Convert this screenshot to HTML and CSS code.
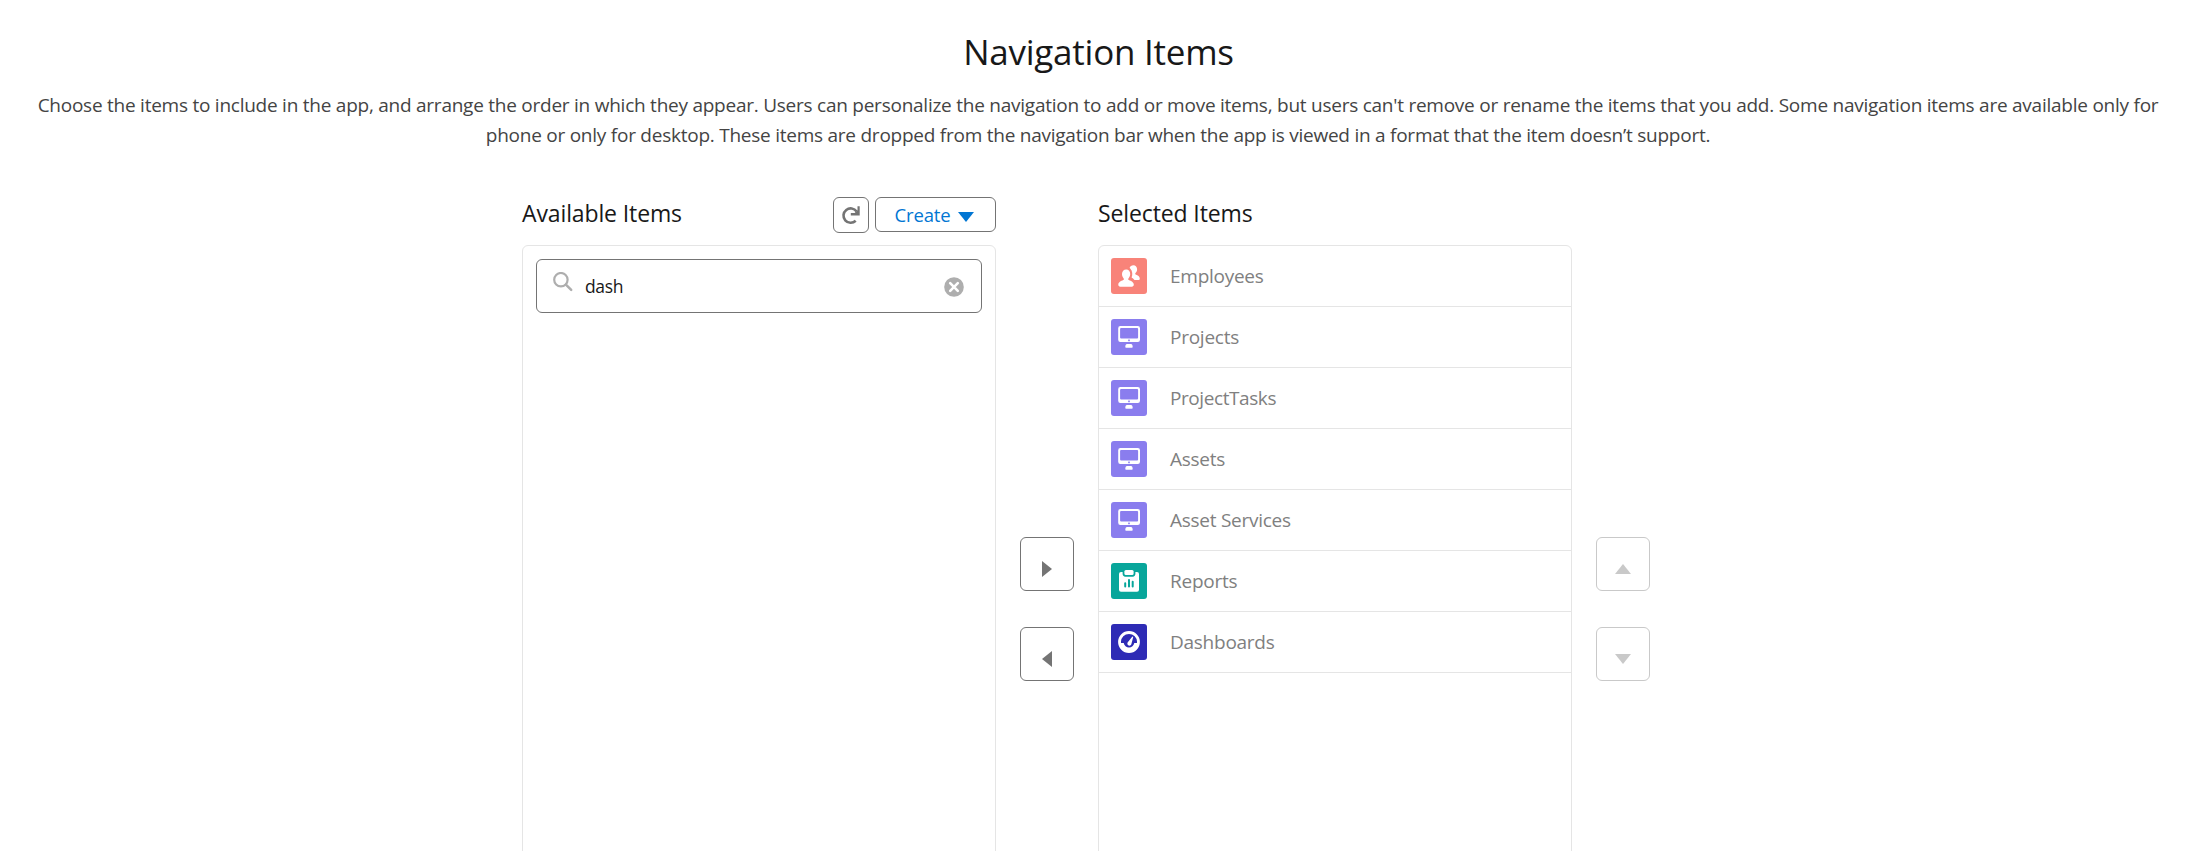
FILE: index.html
```
<!DOCTYPE html>
<html lang="en">
<head>
<meta charset="utf-8">
<title>Navigation Items</title>
<link rel="stylesheet" href="styles.css">
</head>
<body>
<svg class="sprite" aria-hidden="true">
  <symbol id="people" viewBox="0 0 36 36">
    <path fill="#fff" d="M22.400 7.200c2.300 0 3.700 1.800 3.700 4.100 0 1.600-.7 2.900-1.600 3.800-.5.5-.4 1.200.2 1.500 2.200 1 4.100 1.900 4.100 4.100 0 .9-.6 1.400-1.500 1.400h-3.800c-1-1.300-1.900-2-2.900-2.600 1.200-2.900 1-6.500-1.400-9.100-.4-.4-.6-.5-.6-.5.5-1.700 2-2.700 3.800-2.700z"/>
    <path fill="#fff" d="M15.200 11.400c2.500 0 4 2 4 4.600 0 1.700-.7 3.200-1.600 4.200-.6.6-.5 1.400.2 1.700 2.500 1.100 5 2.200 5 4.700 0 1.300-.7 2.200-2 2.200H9.300c-1.300 0-2-.9-2-2.200 0-2.500 2.500-3.600 5-4.700.7-.3.8-1.100.2-1.700-.9-1-1.500-2.500-1.500-4.200 0-2.600 1.700-4.600 4.200-4.600z"/>
  </symbol>
  <symbol id="desktop" viewBox="0 0 36 36">
    <path fill="#fff" fill-rule="evenodd" d="M9.400 7h17.400A2.200 2.200 0 0 1 29 9.200v11.600a2.200 2.200 0 0 1-2.200 2.200H9.400a2.200 2.200 0 0 1-2.200-2.200V9.200A2.200 2.200 0 0 1 9.400 7zm.7 2a1 1 0 0 0-1 1v8.600a1 1 0 0 0 1 1h16a1 1 0 0 0 1-1V10a1 1 0 0 0-1-1zM18 20.400a.9.9 0 1 0 .01 0zM16 25h4c1 0 1.700 1.200 1.700 2.700 0 .7-.4 1.100-1.100 1.100h-5.200c-.7 0-1.100-.4-1.100-1.100 0-1.500.7-2.700 1.700-2.700z"/>
  </symbol>
  <symbol id="report" viewBox="0 0 36 36">
    <path fill="#fff" d="M10 9h16a2 2 0 0 1 2 2v15.800a2 2 0 0 1-2 2H10a2 2 0 0 1-2-2V11a2 2 0 0 1 2-2z"/>
    <path fill="#08a69b" d="M11.600 8.500h12.800v2.300c0 1.700-1 2.900-2.700 2.900h-7.400c-1.700 0-2.700-1.200-2.700-2.900z"/>
    <rect fill="#fff" x="13.400" y="7" width="9.200" height="5" rx="1.500"/>
    <path stroke="#08a69b" stroke-width="2" stroke-linecap="round" d="M14.200 20.300v3.200M18 17v6.500M21.700 18.700v4.800"/>
  </symbol>
  <symbol id="gauge" viewBox="0 0 36 36">
    <circle cx="18" cy="18" r="9.500" fill="none" stroke="#fff" stroke-width="2.800"/>
    <path fill="#fff" d="M9 19h3.700c.5 2.600 2.700 4.500 5.300 4.500s4.800-1.900 5.300-4.500H27c-.5 4.800-4.300 8.500-9 8.500S9.500 23.800 9 19z"/>
    <path fill="#fff" d="M21.900 12.700c.4.200.3.500.2.800l-1.700 6.600c-.4 1.300-1.600 1.900-2.700 1.500-1.200-.5-1.700-1.800-1.100-3l4.400-5.500c.3-.4.500-.6.900-.4z"/>
  </symbol>
</svg>
<main class="page">
  <h1 class="title">Navigation Items</h1>
  <p class="intro">Choose the items to include in the app, and arrange the order in which they appear. Users can personalize the navigation to add or move items, but users can't remove or rename the items that you add. Some navigation items are available only for<br>phone or only for desktop. These items are dropped from the navigation bar when the app is viewed in a format that the item doesn’t support.</p>
  <div class="picker">
    <section class="column">
      <header class="column-head">
        <h2 class="heading">Available Items</h2>
        <div class="actions">
          <button class="refresh" aria-label="Refresh"><svg width="20" height="20" viewBox="0 0 20 20"><path fill="none" stroke="#747474" stroke-width="2.600" d="M14.700 15.800A7.200 7.200 0 1 1 15.600 6.500"/><path fill="#747474" d="M16.500 1.300h2.200v9.200h-8.900V8.100h3.800l2.900-2.900z"/></svg></button>
          <button class="create"><span>Create</span><i class="tri down"></i></button>
        </div>
      </header>
      <div class="panel available">
        <div class="search">
          <svg class="lens" width="20" height="20" viewBox="0 0 20 20" fill="none" stroke="#aeaeae"><circle cx="7.900" cy="7.700" r="6.700" stroke-width="2.200"/><path stroke-width="2.500" stroke-linecap="round" d="M12.900 12.700l5.300 5.200"/></svg>
          <span class="query">dash</span>
          <svg class="clear" width="20" height="20" viewBox="0 0 20 20"><circle cx="10" cy="10" r="9.800" fill="#aeaeae"/><path stroke="#fff" stroke-width="2.600" stroke-linecap="round" d="M6.200 6.200l7.600 7.600M13.800 6.200l-7.600 7.600"/></svg>
        </div>
      </div>
    </section>
    <div class="arrows">
      <button class="arrow" aria-label="Add"><i class="tri right"></i></button>
      <button class="arrow" aria-label="Remove"><i class="tri left"></i></button>
    </div>
    <section class="column">
      <header class="column-head"><h2 class="heading">Selected Items</h2></header>
      <ul class="panel list">
        <li class="item"><svg class="icon coral"><use href="#people"/></svg><span>Employees</span></li>
        <li class="item"><svg class="icon violet"><use href="#desktop"/></svg><span>Projects</span></li>
        <li class="item"><svg class="icon violet"><use href="#desktop"/></svg><span class="tight">ProjectTasks</span></li>
        <li class="item"><svg class="icon violet"><use href="#desktop"/></svg><span>Assets</span></li>
        <li class="item"><svg class="icon violet"><use href="#desktop"/></svg><span>Asset Services</span></li>
        <li class="item"><svg class="icon teal"><use href="#report"/></svg><span>Reports</span></li>
        <li class="item"><svg class="icon indigo"><use href="#gauge"/></svg><span>Dashboards</span></li>
      </ul>
    </section>
    <div class="arrows">
      <button class="arrow" disabled aria-label="Move up"><i class="tri up"></i></button>
      <button class="arrow" disabled aria-label="Move down"><i class="tri down"></i></button>
    </div>
  </div>
</main>
</body>
</html>
```
FILE: styles.css
```
* { box-sizing: border-box; }
body {
  margin: 0;
  background: #fff;
  color: #181818;
  font: 19px/30px "Segoe UI", "Open Sans", "Noto Sans", sans-serif;
}
.sprite { display: none; }
.page { height: 851px; overflow: hidden; padding-top: 27px; }
.title { margin: 0; padding-right: 6px; font-size: 35px; line-height: 50px; font-weight: 400; letter-spacing: -0.25px; text-align: center; }
.intro { margin: 13px 0 0; padding-right: 7px; color: #444; text-align: center; letter-spacing: -0.245px; white-space: nowrap; }
.picker { display: flex; margin: 47px 0 0 522px; }
.column { width: 474px; }
.column-head { display: flex; justify-content: space-between; height: 48px; }
.heading { margin: 0; font-size: 23px; line-height: 33px; font-weight: 400; letter-spacing: -0.12px; }
.actions { display: flex; gap: 6px; }
button { display: flex; align-items: center; justify-content: center; padding: 0; background: #fff; border: 1px solid #747474; border-radius: 6px; font: inherit; }
.refresh { width: 36px; height: 36px; }
.create { width: 121px; height: 35px; gap: 8px; padding-right: 2px; color: #0176d3; font-size: 18.5px; letter-spacing: -0.15px; }
.panel { height: 700px; margin: 0; border: 1px solid #e5e5e5; border-radius: 6px; }
.available { padding: 13px; }
.search { display: flex; align-items: center; height: 54px; padding: 0 17px 0 16px; border: 1px solid #747474; border-radius: 6px; }
.lens { margin-top: -8px; }
.query { margin-left: 12px; font-size: 17.5px; letter-spacing: -0.35px; }
.clear { margin: 2px 0 0 auto; }
.tri { width: 0; height: 0; border: 0 solid transparent; }
.tri.right { border-width: 8px 0 8px 10px; border-left-color: #747474; }
.tri.left { border-width: 8px 10px 8px 0; border-right-color: #747474; }
.tri.up { border-width: 0 8px 10px; border-bottom-color: #c9c9c9; }
.tri.down { border-width: 10px 8px 0; border-top-color: #c9c9c9; }
.create .tri.down { border-top-color: #0176d3; margin-top: 5px; }
.arrows { display: flex; flex-direction: column; gap: 36px; padding: 340px 24px 0; }
.arrow { width: 54px; height: 54px; padding: 10px 0 0; }
.arrow:disabled { border-color: #c9c9c9; }
.list { padding: 0; list-style: none; }
.item { display: flex; align-items: center; gap: 23px; height: 61px; padding: 0 12px; border-bottom: 1px solid #e5e5e5; color: #808080; letter-spacing: -0.26px; }
.tight { letter-spacing: -0.42px; }
.icon { width: 36px; height: 36px; border-radius: 3px; }
.coral { background: #f88379; }
.violet { background: #8a7dee; }
.teal { background: #08a69b; }
.indigo { background: #2e2bb5; }
```
